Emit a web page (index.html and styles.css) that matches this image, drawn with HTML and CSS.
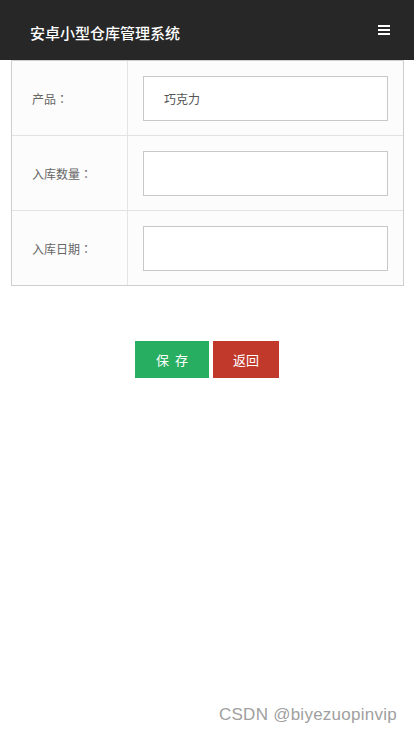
FILE: index.html
```html
<!DOCTYPE html>
<html lang="zh-CN">
<head>
<meta charset="utf-8">
<title>安卓小型仓库管理系统</title>
<link rel="stylesheet" href="styles.css">
</head>
<body>
<header class="topbar">
  <h1 class="title">安卓小型仓库管理系统</h1>
  <svg class="menu" width="12" height="10" viewBox="0 0 12 10"><rect x="0" y="0" width="12" height="2" fill="#fff"/><rect x="0" y="4" width="12" height="2" fill="#fff"/><rect x="0" y="8" width="12" height="2" fill="#fff"/></svg>
</header>
<main class="content">
  <div class="form-table">
    <div class="row">
      <div class="label">产品<span class="colon">：</span></div>
      <div class="field"><div class="input">巧克力</div></div>
    </div>
    <div class="row">
      <div class="label">入库数量<span class="colon">：</span></div>
      <div class="field"><div class="input"></div></div>
    </div>
    <div class="row">
      <div class="label">入库日期<span class="colon">：</span></div>
      <div class="field"><div class="input"></div></div>
    </div>
  </div>
  <div class="actions">
    <button class="btn btn-save">保&nbsp;&nbsp;存</button>
    <button class="btn btn-back">返回</button>
  </div>
</main>
<div class="watermark">CSDN @biyezuopinvip</div>
</body>
</html>
```
FILE: styles.css
```css
html, body {
  margin: 0;
  padding: 0;
  background: #fff;
  font-family: "Microsoft YaHei", "Noto Sans CJK SC", "Liberation Sans", sans-serif;
}
body {
  width: 414px;
  height: 736px;
  display: flex;
  flex-direction: column;
  overflow: hidden;
}
.topbar {
  height: 60px;
  background: #272727;
  display: flex;
  align-items: center;
  justify-content: space-between;
  padding: 0 24px 0 30px;
  box-sizing: border-box;
  flex-shrink: 0;
}
.title {
  margin: 0;
  color: #fff;
  font-size: 15px;
  font-weight: 500;
  line-height: 20px;
  padding-top: 5px;
}
.menu {
  display: block;
  margin-top: -1px;
}
.content {
  flex: 1;
}
.form-table {
  margin-left: 11px;
  width: 393px;
  border: 1px solid #cfcfcf;
  box-sizing: border-box;
  background: #fcfcfc;
}
.row {
  display: flex;
  height: 75px;
  border-bottom: 1px solid #e2e2e2;
  box-sizing: border-box;
}
.row:last-child {
  height: 74px;
  border-bottom: none;
}
.label {
  width: 116px;
  border-right: 1px solid #e5e5e5;
  display: flex;
  align-items: center;
  padding-left: 20px;
  box-sizing: border-box;
  font-size: 12px;
  color: #666;
}
.colon {
  font-family: "Noto Sans CJK TC", sans-serif;
}
.field {
  flex: 1;
  display: flex;
  align-items: flex-start;
  padding: 15px 14px 0 15px;
}
.input {
  width: 245px;
  height: 45px;
  border: 1px solid #c8c8c8;
  background: #fff;
  box-sizing: border-box;
  display: flex;
  align-items: center;
  padding-left: 20px;
  font-size: 12px;
  color: #555;
}
.actions {
  display: flex;
  justify-content: center;
  gap: 4px;
  margin-top: 55px;
}
.btn {
  height: 37px;
  border: none;
  color: #fff;
  font-family: inherit;
  font-size: 13px;
  padding: 0;
  cursor: pointer;
}
.btn-save {
  width: 74px;
  background: #27ae60;
}
.btn-back {
  width: 66px;
  background: #c0392b;
}
.watermark {
  position: absolute;
  left: 219px;
  top: 705px;
  font-family: "Liberation Sans", Arial, sans-serif;
  font-size: 17px;
  color: #a0a0a0;
  text-shadow: 1px 1px 0 #fff;
  letter-spacing: 0.25px;
}
```
